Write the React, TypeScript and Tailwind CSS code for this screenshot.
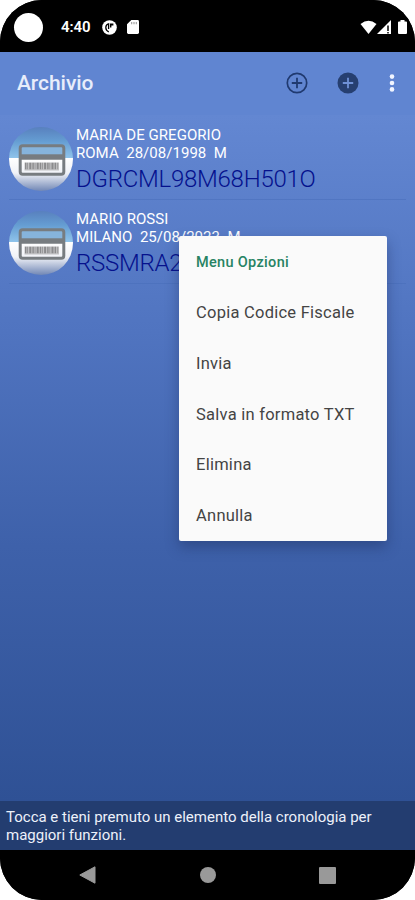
interface Person {
  id: string;
  name: string;
  details: string;
  code: string;
}

const PEOPLE: Person[] = [
  {
    id: "maria",
    name: "MARIA DE GREGORIO",
    details: "ROMA  28/08/1998  M",
    code: "DGRCML98M68H501O",
  },
  {
    id: "mario",
    name: "MARIO ROSSI",
    details: "MILANO  25/08/2023  M",
    code: "RSSMRA2",
  },
];

const OPTIONS = [
  "Copia Codice Fiscale",
  "Invia",
  "Salva in formato TXT",
  "Elimina",
  "Annulla",
];

function StatusBar() {
  return (
    <div className="flex h-[52px] shrink-0 items-center bg-black pt-[2px] text-white">
      <div className="ml-[14px] size-[29px] rounded-full bg-white" />
      <span className="ml-[18px] w-[30px] whitespace-nowrap pt-[1px] text-[15px] font-semibold tracking-[-0.1px]">
        4:40
      </span>
      <svg className="ml-[11px] size-[15px]" viewBox="0 0 15 15">
        <circle cx="7.5" cy="7.5" r="7.3" fill="white" />
        <path
          d="M6.8 11.8Q3.8 10.8 3.8 7.6Q3.8 4.4 6.6 3.8V9"
          fill="none"
          stroke="black"
          strokeWidth="1.3"
        />
        <path d="M8 3.6H11.4V5.6H9.4V7.4H8Z" fill="black" />
      </svg>
      <svg className="ml-[10px] h-[14px] w-[12px]" viewBox="0 0 12 14">
        <path
          d="M4.3 0H10.6Q12 0 12 1.4V12.6Q12 14 10.6 14H1.4Q0 14 0 12.6V4.3Z"
          fill="white"
        />
        <path d="M4.7 2V4.2M7 2V4.2M9.3 2V4.2" stroke="#999" strokeWidth="1.1" />
      </svg>
      <svg
        className="ml-auto mr-[7px] h-[15px] w-[48px]"
        viewBox="0 0 48 15"
        fill="white"
      >
        <path d="M0.5 4Q8.5 -2.5 16.5 4L8.5 14Z" />
        <path d="M31 0V14H17Z" />
        <path d="M28 5.5V11" stroke="black" strokeWidth="1.5" />
        <path d="M28 12V13.4" stroke="black" strokeWidth="1.5" />
        <path d="M40.5 0H44.5V1.5H46Q47 1.5 47 2.5V13Q47 14 46 14H39Q38 14 38 13V2.5Q38 1.5 39 1.5H40.5Z" />
      </svg>
    </div>
  );
}

function Toolbar() {
  return (
    <header className="flex h-[63px] shrink-0 items-center bg-[#6085d1] pb-[2px]">
      <h1 className="ml-[17px] pt-[3px] text-[21px] font-medium tracking-[-0.05px] text-[#e8edfb]">
        Archivio
      </h1>
      <button className="ml-auto" aria-label="Aggiungi">
        <svg className="size-[22px]" viewBox="0 0 22 22" fill="none" stroke="#203a70">
          <circle cx="11" cy="11" r="9.7" strokeWidth="1.7" />
          <path d="M11 5.8V16.2M5.8 11H16.2" strokeWidth="1.8" />
        </svg>
      </button>
      <button className="ml-[29px]" aria-label="Nuovo">
        <svg className="size-[22px]" viewBox="0 0 22 22">
          <circle cx="11" cy="11" r="10.5" fill="#263f70" />
          <path d="M11 5.8V16.2M5.8 11H16.2" stroke="#6f91d6" strokeWidth="1.8" />
        </svg>
      </button>
      <button className="ml-[30px] mr-[20px]" aria-label="Altro">
        <svg className="h-[20px] w-[6px]" viewBox="0 0 6 20" fill="#f1f5ff">
          <circle cx="3" cy="3.6" r="2.3" />
          <circle cx="3" cy="10" r="2.3" />
          <circle cx="3" cy="16.4" r="2.3" />
        </svg>
      </button>
    </header>
  );
}

function CardBadge() {
  return (
    <div className="mt-[1px] size-16 shrink-0 overflow-hidden rounded-full bg-[linear-gradient(#5880be_0%,#659dd2_22%,#8fc3ea_48%,#ffffff_49%,#f0f2f7_72%,#7187b5_100%)]">
      <svg className="size-16" viewBox="0 0 64 64" fill="none">
        <path d="M12 20H54V27H12Z" fill="#86b4dc" />
        <rect x="11.2" y="18.7" width="43.6" height="28.6" rx="2.5" stroke="#777c80" strokeWidth="3" />
        <path d="M11 30H55" stroke="#777c80" strokeWidth="5.5" />
        <path d="M15.5 39.5H50" stroke="#c2c2c4" strokeWidth="8" />
        <path d="M16 39H50" stroke="#8b8b8d" strokeWidth="6.5" strokeDasharray="1.4 0.9 0.7 1.3 2 1.1" />
      </svg>
    </div>
  );
}

function PersonRow({ person }: { person: Person }) {
  return (
    <li className="mx-[9px] flex h-[84.5px] border-b border-[#456bb9]/45 pt-[10.5px]">
      <CardBadge />
      <div className="ml-[3px] whitespace-pre text-[15px] leading-[18px] text-white">
        <p className="tracking-[0.05px]">{person.name}</p>
        <p className="tracking-[0.03px]">{person.details}</p>
        <p className="mt-[1px] text-[24px] font-light leading-[32px] tracking-[-0.25px] text-[#05118d]">
          {person.code}
        </p>
      </div>
    </li>
  );
}

function OptionsMenu() {
  return (
    <div
      role="menu"
      className="absolute left-[179px] top-[236px] h-[305px] w-[208px] rounded-[2px] bg-[#fafafa] pl-[17px] pt-[1px] shadow-[0_6px_14px_rgba(25,40,85,0.4)]"
    >
      <p className="flex h-[51px] items-center text-[14.5px] font-medium tracking-[0.32px] text-[#278363]">
        Menu Opzioni
      </p>
      {OPTIONS.map((option) => (
        <button
          key={option}
          role="menuitem"
          className="flex h-[50.8px] w-full items-center whitespace-nowrap text-[16.5px] tracking-[0.25px] text-[#444]"
        >
          {option}
        </button>
      ))}
    </div>
  );
}

function NavigationBar() {
  return (
    <nav className="flex h-[50px] shrink-0 items-center bg-black pl-[79px] pr-[79px]">
      <svg className="h-[18px] w-[17px]" viewBox="0 0 17 18">
        <path d="M16 0.8V17.2L0.8 9Z" fill="#999" stroke="#999" strokeLinejoin="round" />
      </svg>
      <div className="ml-auto size-4 rounded-full bg-[#999]" />
      <div className="ml-auto size-[17px] rounded-[1px] bg-[#999]" />
    </nav>
  );
}

export default function App() {
  return (
    <div className="h-[900px] w-[415px] bg-white font-[Roboto,sans-serif]">
      <div className="relative flex h-full flex-col overflow-hidden rounded-[42px] bg-black">
        <StatusBar />
        <main className="flex flex-1 flex-col bg-[linear-gradient(#6387d2_8%,#5074c0_35%,#3e61aa_62%,#2c4e91)]">
          <Toolbar />
          <ul className="flex-1">
            {PEOPLE.map((person) => (
              <PersonRow key={person.id} person={person} />
            ))}
          </ul>
          <p className="h-[49px] shrink-0 bg-[#233d70] pl-[6px] pt-[8px] text-[15px] leading-[17.5px] text-[#edf1fa]">
            Tocca e tieni premuto un elemento della cronologia per
            <br />
            maggiori funzioni.
          </p>
        </main>
        <NavigationBar />
        <OptionsMenu />
      </div>
    </div>
  );
}
